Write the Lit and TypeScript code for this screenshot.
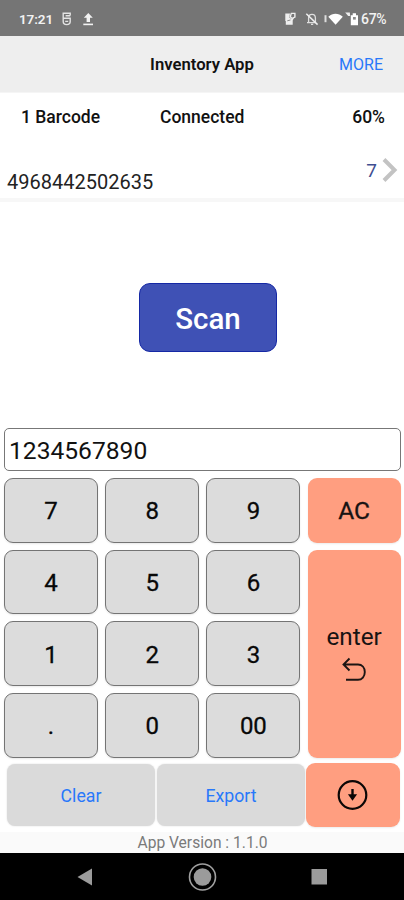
import { LitElement, html, css } from "lit";
import { customElement, property } from "lit/decorators.js";

@customElement("status-bar")
class StatusBar extends LitElement {
  static styles = css`
    :host { display: flex; align-items: center; height: 36px; box-sizing: border-box; padding: 1px 17px 0 19px;
      background: #757575; color: #f2f2f2; font: 600 13.5px Roboto, sans-serif; }
    .time { width: 42px; letter-spacing: -0.1px; }
    .left { flex: 1; display: block; height: 18px; }
    .right { display: block; width: 78px; height: 18px; flex: none; }
    .battery { width: 26px; font-size: 14px; font-weight: 500; letter-spacing: -0.3px; white-space: nowrap; }
  `;
  render() {
    return html`
      <span class="time">17:21</span>
      <svg class="left" viewBox="0 0 222 18" preserveAspectRatio="xMinYMid meet" fill="none" stroke="#e4e4e4">
        <path d="M9.2 5.5V3.2H2.2V8.3H9.2V11.5C9.2 13.8 7.5 14.6 5.7 14.6S2.2 13.4 2.2 11.5V8.3M4.6 5.8H9.3M4.2 11.4H7.2" stroke-width="1.4"/>
        <path d="M22.8 7.8L27.3 3L31.8 7.8H29V12H25.6V7.8Z" fill="#f2f2f2" stroke="none"/>
        <path d="M22.3 14.4H32" stroke="#f2f2f2" stroke-width="1.6"/>
      </svg>
      <svg class="right" viewBox="0 0 78 18">
        <path d="M2.3 3.5H7L6.3 7.5L8.5 9L11.2 7.5L9.7 10.5V14.8H2.8V11H2.3Z" fill="#eee"/>
        <path d="M7.3 6.8L8.3 3.4H11.9V7L9 8.5Z" stroke="#eee" stroke-width="1.4" fill="none"/>
        <path d="M4.3 10.8L7.5 10" stroke="#8c8c8c" stroke-width="1" fill="none"/>
        <path d="M24 12.7H33M25.6 12.5V8C25.6 5.8 27 4.4 29 4.4S32.4 5.5 32.4 8V12.5M28 14.4H30.2" stroke="#dedede" stroke-width="1.3" fill="none"/>
        <path d="M23.3 3.7L34.6 14.6" stroke="#eee" stroke-width="1.5"/>
        <path d="M41.5 5.2H43.5V12.2H41.5Z" fill="#ddd"/>
        <path d="M45.3 6.8C49.5 2.8 55.5 2.8 59.8 6.8L52.6 14.7Z" fill="#fff"/>
        <path d="M62.2 2.5H66.8L67.2 6.1H65.2Z" fill="#eee"/>
        <path d="M67.8 5.3H69.7V3.3H73V5.3H75V15.2H67.8Z" fill="#fff"/>
        <path d="M70 7H72.8V9.6H70Z" fill="#8b8b8b"/>
      </svg>
      <span class="battery">67%</span>`;
  }
}

@customElement("pad-key")
class PadKey extends LitElement {
  @property() label = "";
  static styles = css`
    :host { display: flex; align-items: center; justify-content: center; box-sizing: border-box;
      padding-top: 2px; border: 1px solid #747474; border-radius: 9px; background: #dcdcdc;
      box-shadow: 0 1px 2px #00000018; color: #080808; font: 450 24px Roboto, sans-serif;
      -webkit-text-stroke: 0.3px #080808; }
  `;
  render() { return html`${this.label}`; }
}

@customElement("app-root")
class AppRoot extends LitElement {
  static styles = css`
    :host { display: flex; flex-direction: column; width: 404px; height: 900px; overflow: hidden;
      background: #fff; color: #111; font-family: Roboto, sans-serif; }
    * { box-sizing: border-box; }
    .header { display: grid; grid-template-columns: 1fr 106px 1fr; align-items: center; height: 57px;
      background: #eee; border-bottom: 1px solid #f5f5f5; }
    .title { grid-column: 2; font-size: 16.7px; font-weight: 650; white-space: nowrap; text-align: center; }
    .more { justify-self: end; padding-right: 21px; font-size: 16px; color: #2878fa; }
    .summary { display: grid; grid-template-columns: 160px 1fr auto; align-items: center; height: 48px;
      padding: 0 19px 0 0; font-size: 17.5px; font-weight: 500; }
    .summary span:first-child { padding-left: 21px; }
    .item { display: flex; height: 61px; padding: 0 6px 0 7px; border-bottom: 4px solid #f7f7f7; color: #222; }
    .code { flex: 1; align-self: flex-end; padding-bottom: 4px; font-size: 20px; line-height: 24px; }
    .count { padding-top: 18px; font-size: 19px; line-height: 24px; color: #404f91; }
    .chevron { width: 16px; height: 26px; margin: 16px 0 0 5px; }
    .stage { height: 226px; display: flex; justify-content: center; padding: 81px 0 0 12px; }
    .scan { width: 138px; height: 69px; display: flex; align-items: center; justify-content: center; padding-top: 3px;
      border: 1px solid #1528a5; border-radius: 11px; background: #3f51b5; color: #fff; font-size: 29.5px; font-weight: 500; }
    .entry { height: 43px; margin: 0 3px 0 4px; padding: 2px 0 0 4px; border: 1px solid #777; border-radius: 5px;
      display: flex; align-items: center; font-size: 24.6px; color: #111; }
    .pad { display: grid; grid-template-columns: 94px 94px 94px 93px; grid-template-rows: repeat(4, 64.5px);
      gap: 7.2px 7.2px; padding: 7px 0 0 4px; }
    .accent { display: flex; flex-direction: column; align-items: center; justify-content: center;
      background: #ff9e80; border-radius: 9px; font-size: 24px; color: #171313; box-shadow: 0 1px 2px #00000014; }
    .ac { padding-top: 1px; font-size: 24.5px; -webkit-text-stroke: 0.3px #171313; }
    .enter { grid-column: 4; grid-row: 2 / 5; padding-bottom: 3px; font-size: 24.3px; }
    .enter svg { width: 26px; height: 25px; margin-top: 6px; }
    .actions { display: grid; grid-template-columns: 148px 148px 94px; column-gap: 2px; height: 74.4px;
      padding: 5.4px 0 0 7px; align-items: start; }
    .action { display: flex; align-items: center; justify-content: center; height: 62px; margin-top: 1px; padding-top: 2px;
      background: #dadada; border-radius: 8px; color: #2878fa; font-size: 17.7px; box-shadow: 0 0 2px #0002; }
    .download { width: 94px; height: 64px; margin-left: -0.8px; }
    .download svg { width: 32px; height: 32px; }
    .version { flex: 1; display: flex; justify-content: center; align-items: center; padding: 2px 0 0 1px;
      background: #fafafa; color: #7a7a7a; font-size: 15.6px; line-height: 18px; }
    .nav { height: 47px; background: #000; flex: none; }
    .nav svg { display: block; width: 404px; height: 47px; }
  `;

  key(label: string) { return html`<pad-key label=${label}></pad-key>`; }

  render() {
    return html`
      <status-bar></status-bar>
      <div class="header"><span class="title">Inventory App</span><span class="more">MORE</span></div>
      <div class="summary"><span>1 Barcode</span><span>Connected</span><span>60%</span></div>
      <div class="item">
        <span class="code">4968442502635</span><span class="count">7</span>
        <svg class="chevron" viewBox="0 0 16 26"><path d="M2 2.5L12.5 13L2 23.5" fill="none" stroke="#c3c3c3" stroke-width="4"/></svg>
      </div>
      <div class="stage"><div class="scan">Scan</div></div>
      <div class="entry">1234567890</div>
      <div class="pad">
        ${["7", "8", "9"].map((k) => this.key(k))}
        <div class="accent ac">AC</div>
        ${["4", "5", "6"].map((k) => this.key(k))}
        <div class="accent enter">enter
          <svg viewBox="0 0 26 25" fill="none" stroke="#1c1513" stroke-width="1.9"><path d="M8.5 1.5L2.5 7.5L8.5 13.5M2.5 7.5H17C21 7.5 23.8 10.5 23.8 15S21 22.8 17 22.8H5"/></svg>
        </div>
        ${["1", "2", "3", ".", "0", "00"].map((k) => this.key(k))}
      </div>
      <div class="actions">
        <div class="action">Clear</div><div class="action">Export</div>
        <div class="accent download"><svg viewBox="0 0 32 32" fill="none" stroke="#0b0706">
          <circle cx="15.5" cy="16" r="13.8" stroke-width="2.2"/><path d="M15.5 10V18" stroke-width="2.4"/><path d="M10.9 15.3H20.1L15.5 21.7Z" fill="#0b0706" stroke="none"/></svg></div>
      </div>
      <div class="version">App Version : 1.1.0</div>
      <div class="nav"><svg viewBox="0 0 404 47">
        <path d="M77.5 24L92 15.5V32.5Z" fill="#9b9b9b"/>
        <circle cx="202.5" cy="24" r="13" fill="none" stroke="#a0a0a0" stroke-width="1.6"/><circle cx="202.5" cy="24" r="8.8" fill="#9b9b9b"/>
        <path d="M311.5 16H327V31.5H311.5Z" fill="#9b9b9b"/>
      </svg></div>`;
  }
}
